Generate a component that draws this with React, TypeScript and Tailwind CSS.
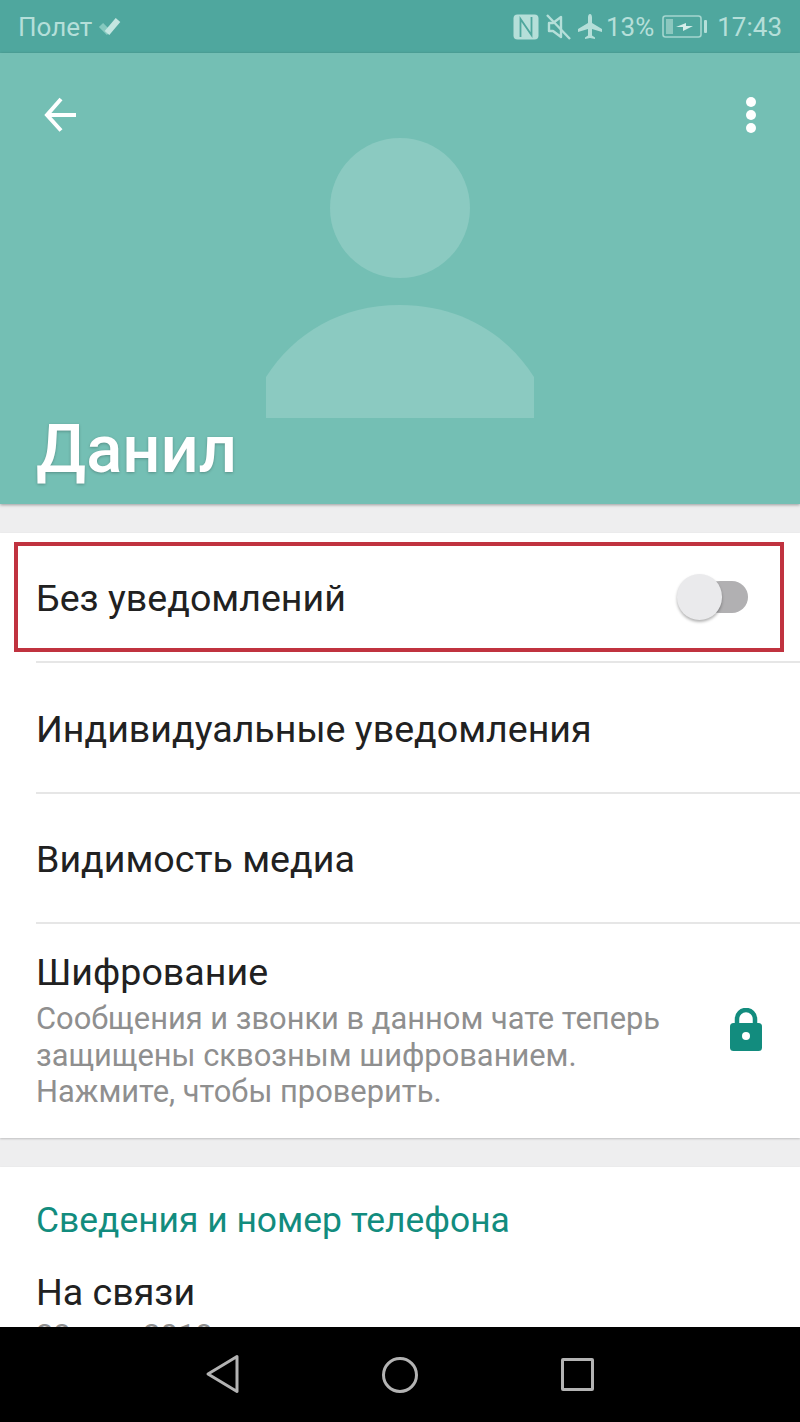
import React from "react";

const font = { fontFamily: "Roboto, sans-serif" };

// status bar glyphs
const StatusIcons = () => (
  <div className="flex items-center">
    {/* NFC */}
    <svg width="26" height="26" viewBox="0 0 26 26" className="mr-[7px]">
      <rect x="0.500" y="0.500" width="25" height="25" rx="4" fill="#b5dfd9" />
      <path d="M7.500 23V5l11 16M18.500 3v18L7.500 5" stroke="#4fa79e" strokeWidth="1.800" fill="none" />
    </svg>
    {/* muted speaker */}
    <svg width="26" height="26" viewBox="0 0 26 26" className="mr-[5px]">
      <path d="M3 9h4l8-6v20l-8-6H3z" fill="none" stroke="#b5dfd9" strokeWidth="2.400" strokeLinejoin="round" />
      <path d="M1 1l23 24" stroke="#b5dfd9" strokeWidth="2.400" />
    </svg>
    {/* airplane */}
    <svg width="26" height="26" viewBox="0 0 26 26" className="mr-[3px]">
      <path
        d="M13 0c1.300 0 2 1.600 2 3.500V9l10 6v3l-10-3v6.500l3 2V25l-5-1-5 1v-1.500l3-2V15L1 18v-3l10-6V3.500C11 1.600 11.700 0 13 0z"
        fill="#b5dfd9"
      />
    </svg>
    <span className="text-[26px] leading-none text-[#b5dfd9] mr-[8px]">13%</span>
    {/* battery */}
    <svg width="46" height="24" viewBox="0 0 46 24" className="mr-[9px]">
      <rect x="1" y="1" width="38" height="21" rx="2.500" fill="none" stroke="#a5d6cf" strokeWidth="1.600" />
      <rect x="4" y="4" width="7" height="15" fill="#8cc8bf" />
      <path d="M14 12l10-4v3h7l-10 5v-4z" fill="#d5eeea" />
      <rect x="42" y="5" width="3" height="13" rx="1" fill="#b5dfd9" />
    </svg>
    <span className="text-[26px] leading-none text-[#b5dfd9]">17:43</span>
  </div>
);

const Divider = () => <div className="ml-9 h-[2px] bg-[#e6e6e6]" />;

const App = () => {
  return (
    <div className="flex h-[1422px] w-[800px] flex-col overflow-hidden bg-[#eeeeef]" style={font}>
      <div className="flex-1 overflow-hidden">
        {/* Status bar */}
        <div className="flex h-[53px] items-center justify-between bg-[#4fa79e] pl-[18px] pr-[18px]">
          <div className="flex items-center">
            <span className="text-[26px] leading-none text-[#b5dfd9]">Полет</span>
            <svg width="24" height="20" viewBox="0 0 24 20" className="ml-[6px] mt-[1px]">
              <path d="M3 8l8 8" stroke="#86c9bf" strokeWidth="6" fill="none" />
              <path d="M9 16L20 3" stroke="#c4e6e1" strokeWidth="6" fill="none" />
            </svg>
          </div>
          <StatusIcons />
        </div>

        {/* Contact header */}
        <div className="relative h-[451px] bg-[#74bfb4] shadow-[0_1px_3px_rgba(0,0,0,0.35)]">
          <svg width="268" height="282" viewBox="0 0 268 282" className="absolute left-[266px] top-[85px]">
            <circle cx="134" cy="70" r="70" fill="#8bcac1" />
            <path d="M0 280V239C28 195 75 167 134 167C193 167 240 195 268 239V280Z" fill="#8bcac1" />
          </svg>
          <div className="relative flex h-full flex-col justify-between px-9 pb-[15px] pt-[42px]">
            <div className="flex items-center justify-between">
              <svg width="40" height="40" viewBox="0 0 40 40" className="ml-[4px]">
                <path d="M36 20H8M21 4L7 20 21 35.500" fill="none" stroke="#fff" strokeWidth="4" />
              </svg>
              <div className="mr-[8px] flex flex-col gap-[3px]">
                <div className="h-[10px] w-[10px] rounded-full bg-white" />
                <div className="h-[10px] w-[10px] rounded-full bg-white" />
                <div className="h-[10px] w-[10px] rounded-full bg-white" />
              </div>
            </div>
            <h1 className="text-[67px] font-medium leading-[80px] text-white [text-shadow:0_1px_3px_rgba(0,0,0,0.25)]">
              Данил
            </h1>
          </div>
        </div>

        {/* Settings card */}
        <div className="relative mt-[29px] bg-white shadow-[0_1px_2px_rgba(0,0,0,0.2)]">
          <div className="flex h-[128px] items-center justify-between pl-9 pr-[53px]">
            <span className="pt-1 text-[37.600px] leading-none text-[#212121]">Без уведомлений</span>
            <div className="relative h-8 w-[60px]">
              <div className="absolute right-[-1px] top-0 h-8 w-11 rounded-full bg-[#b1b0b2]" />
              <div className="absolute left-[-10px] top-[-7px] h-[46px] w-[45px] rounded-full bg-[#eaeaec] shadow-[0_2px_3px_rgba(0,0,0,0.3)]" />
            </div>
          </div>
          {/* annotation box */}
          <div className="absolute left-[14px] top-[9px] h-[110px] w-[770px] border-4 border-[#c0323f]" />
          <Divider />
          <div className="flex h-[129px] items-center pl-9 pt-1 text-[37.600px] leading-none text-[#212121]">
            Индивидуальные уведомления
          </div>
          <Divider />
          <div className="flex h-[128px] items-center pl-9 pt-1 text-[37.600px] leading-none text-[#212121]">
            Видимость медиа
          </div>
          <Divider />
          <div className="flex h-[214px] items-start justify-between pl-9 pr-[37px] pt-[28px]">
            <div>
              <div className="text-[37.600px] leading-[40px] text-[#212121]">Шифрование</div>
              <p className="mt-[9px] text-[30.850px] leading-[36.500px] text-[#8f8f8f]">
                Сообщения и звонки в данном чате теперь
                <br />
                защищены сквозным шифрованием.
                <br />
                Нажмите, чтобы проверить.
              </p>
            </div>
            <svg width="34" height="44" viewBox="0 0 34 44" className="mt-[56px]">
              <path d="M8 20v-9a9 9 0 0 1 18 0v9" fill="none" stroke="#128c7e" strokeWidth="4.500" />
              <rect x="1" y="15" width="32" height="28" rx="3.500" fill="#128c7e" />
              <circle cx="17" cy="28" r="4" fill="#fff" />
            </svg>
          </div>
        </div>

        {/* Info card */}
        <div className="mt-[29px] bg-white pl-9 pt-[33px] shadow-[0_1px_2px_rgba(0,0,0,0.2)]">
          <div className="text-[35.400px] leading-[40px] text-[#128c7e]">Сведения и номер телефона</div>
          <div className="mt-[32px] text-[37.600px] leading-[40px] text-[#212121]">На связи</div>
          <div className="mt-[6px] text-[31px] leading-[36px] text-[#8f8f8f]">23 мая 2018 г.</div>
        </div>
      </div>

      {/* Navigation bar */}
      <div className="flex h-[95px] shrink-0 items-center bg-black pl-[204px]">
        <svg width="38" height="40" viewBox="0 0 38 40" className="mt-[-1px]">
          <path d="M33 2.500L4 20 33 37.500z" fill="none" stroke="#b3b3b3" strokeWidth="3" strokeLinejoin="round" />
        </svg>
        <div className="ml-[140px] h-9 w-9 rounded-full border-[3px] border-[#b3b3b3]" />
        <div className="ml-[143px] h-[33px] w-[33px] rounded-[2px] border-[3px] border-[#b3b3b3]" />
      </div>
    </div>
  );
};

export default App;
